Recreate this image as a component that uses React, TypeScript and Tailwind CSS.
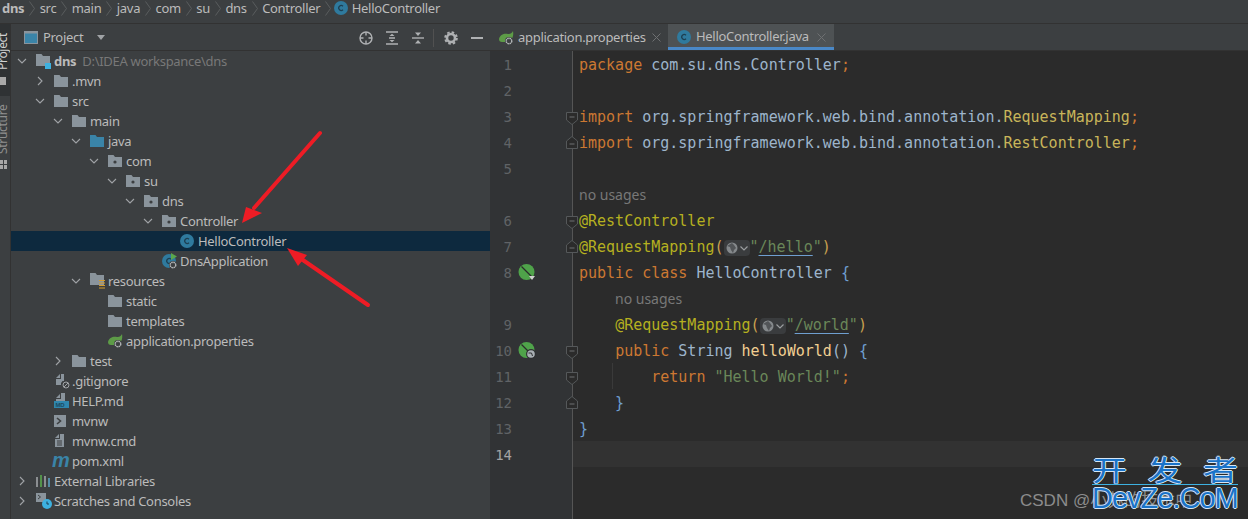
import type { ReactNode } from 'react';

const uiFont = "font-['Noto_Sans',sans-serif] tracking-[-0.3px]";

function Chevron({ open }: { open: boolean }) {
  return (
    <svg width="10" height="10" viewBox="0 0 10 10" fill="none" stroke="#a0a3a6" strokeWidth="1.1">
      {open ? <path d="M1 3l4 4 4-4" /> : <path d="M3 1l4 4-4 4" />}
    </svg>
  );
}

function Folder({ color = '#8a949c', dot = false }: { color?: string; dot?: boolean }) {
  return (
    <svg width="14" height="12" viewBox="0 0 14 12">
      <path d="M0 0h5.5l1.5 2h7v10H0z" fill={color} />
      {dot && <circle cx="7" cy="7" r="1.6" fill="#3c3f41" />}
    </svg>
  );
}

function ClassIcon({ size = 14 }: { size?: number }) {
  return (
    <svg width={size} height={size} viewBox="0 0 14 14">
      <circle cx="7" cy="7" r="7" fill="#2f7a9e" />
      <path d="M9 5.2a2.5 2.5 0 1 0 0 3.6" fill="none" stroke="#1d3f52" strokeWidth="1.2" />
    </svg>
  );
}

function Gear({ x, y }: { x: number; y: number }) {
  return (
    <g>
      <circle cx={x} cy={y} r="4" fill="#3c3f41" />
      <circle cx={x} cy={y} r="2.8" fill="none" stroke="#b5b8ba" strokeWidth="1.4" strokeDasharray="1.6 0.6" />
    </g>
  );
}

function LeafIcon() {
  return (
    <svg width="16" height="14" viewBox="0 0 16 14">
      <path d="M0 8C1 3 6 2 9 3c2 .5 4-1 5-3 1 5-1 10-6 11H3C1 11 0 10 0 8z" fill="#5d9b47" />
      <Gear x={10} y={10} />
    </svg>
  );
}

function AppIcon() {
  return (
    <svg width="16" height="16" viewBox="0 0 16 16">
      <circle cx="7" cy="8" r="7" fill="#2f7a9e" />
      <path d="M9 6.2a2.5 2.5 0 1 0 0 3.6" fill="none" stroke="#1d3f52" strokeWidth="1.2" />
      <path d="M9 0l6 3.5-6 3.5z" fill="#5aa74d" />
      <Gear x={11} y={12} />
    </svg>
  );
}

function treeIcon(kind: string) {
  switch (kind) {
    case 'module':
      return (
        <svg width="16" height="15" viewBox="0 0 16 15">
          <path d="M0 0h5.5l1.5 2h7v10H0z" fill="#8a949c" />
          <rect x="9" y="9" width="6" height="6" fill="#3db1e0" />
        </svg>
      );
    case 'folder':
      return <Folder />;
    case 'source':
      return <Folder color="#3a84a8" />;
    case 'package':
      return <Folder dot />;
    case 'resources':
      return (
        <svg width="16" height="16" viewBox="0 0 16 16">
          <path d="M0 0h5.5l1.5 2h7v10H0z" fill="#8a949c" />
          <path d="M9 7.5h6M9 10h6M9 12.5h6M9 15h6" stroke="#d49b2c" strokeWidth="1.2" />
        </svg>
      );
    case 'class':
      return <ClassIcon />;
    case 'app':
      return <AppIcon />;
    case 'leaf':
      return <LeafIcon />;
    case 'ignore':
      return (
        <svg width="16" height="16" viewBox="0 0 16 16">
          <path d="M2 5l4-4v4zM7 1h3v7H8.5L7 10v2H2V6h5z" fill="#8a949c" />
          <circle cx="12" cy="12" r="3" fill="none" stroke="#a0a3a6" strokeWidth="1" />
          <path d="M10 14l4-4" stroke="#a0a3a6" />
        </svg>
      );
    case 'md':
      return (
        <svg width="16" height="16" viewBox="0 0 16 16">
          <path d="M2 5l4-4v4zM7 0h4v8H2V6h5z" fill="#8a949c" />
          <rect x="0" y="8" width="15" height="7" fill="#2f86ad" />
          <text x="1.5" y="14" fontSize="6" fontWeight="700" fill="#1c4a60" fontFamily="Liberation Sans, sans-serif">MD</text>
        </svg>
      );
    case 'shell':
      return (
        <svg width="14" height="14" viewBox="0 0 14 14">
          <rect width="12" height="12" y="1" fill="#8a949c" />
          <path d="M3 4l3.5 3L3 10" fill="none" stroke="#3c3f41" strokeWidth="1.6" />
        </svg>
      );
    case 'text':
      return (
        <svg width="14" height="16" viewBox="0 0 14 16">
          <path d="M1 5l4-4v4zM6 1h4v13H1V6h5z" fill="#8a949c" />
          <path d="M3 8h5M3 10h5M3 12h5" stroke="#3c3f41" />
        </svg>
      );
    case 'maven':
      return (
        <span className="font-['Liberation_Sans',sans-serif] -ml-[2px] -mt-[3px] text-[20px] leading-none font-bold italic text-[#3a84a8]">m</span>
      );
    case 'libs':
      return (
        <svg width="15" height="12" viewBox="0 0 15 12">
          <path d="M1 2v10" stroke="#a0a3a6" strokeWidth="1.6" />
          <path d="M5 0v12" stroke="#5aa74d" strokeWidth="1.6" />
          <path d="M9 1v11" stroke="#a0a3a6" strokeWidth="1.6" />
          <path d="M13 3v9" stroke="#5a9fc0" strokeWidth="1.6" />
        </svg>
      );
    case 'scratch':
      return (
        <svg width="16" height="16" viewBox="0 0 16 16">
          <rect width="10" height="9" fill="#8a949c" />
          <path d="M2 2l2.5 2L2 6" fill="none" stroke="#3c3f41" />
          <circle cx="11" cy="11" r="5" fill="#3db1e0" />
          <path d="M11 8.5V11h2" fill="none" stroke="#1d3f52" />
        </svg>
      );
    default:
      return null;
  }
}

type TreeRow = { depth: number; label: string; icon: string; open?: boolean; hint?: string; selected?: boolean };

const treeRows: TreeRow[] = [
  { depth: 0, label: 'dns', icon: 'module', open: true, hint: 'D:\\IDEA workspance\\dns' },
  { depth: 1, label: '.mvn', icon: 'folder', open: false },
  { depth: 1, label: 'src', icon: 'folder', open: true },
  { depth: 2, label: 'main', icon: 'folder', open: true },
  { depth: 3, label: 'java', icon: 'source', open: true },
  { depth: 4, label: 'com', icon: 'package', open: true },
  { depth: 5, label: 'su', icon: 'package', open: true },
  { depth: 6, label: 'dns', icon: 'package', open: true },
  { depth: 7, label: 'Controller', icon: 'package', open: true },
  { depth: 8, label: 'HelloController', icon: 'class', selected: true },
  { depth: 7, label: 'DnsApplication', icon: 'app' },
  { depth: 3, label: 'resources', icon: 'resources', open: true },
  { depth: 4, label: 'static', icon: 'folder' },
  { depth: 4, label: 'templates', icon: 'folder' },
  { depth: 4, label: 'application.properties', icon: 'leaf' },
  { depth: 2, label: 'test', icon: 'folder', open: false },
  { depth: 1, label: '.gitignore', icon: 'ignore' },
  { depth: 1, label: 'HELP.md', icon: 'md' },
  { depth: 1, label: 'mvnw', icon: 'shell' },
  { depth: 1, label: 'mvnw.cmd', icon: 'text' },
  { depth: 1, label: 'pom.xml', icon: 'maven' },
  { depth: 0, label: 'External Libraries', icon: 'libs', open: false },
  { depth: 0, label: 'Scratches and Consoles', icon: 'scratch', open: false },
];

function TreeItem({ row }: { row: TreeRow }) {
  return (
    <div
      className={`flex h-5 items-center text-[13px] leading-[18px] text-[#bbbbbb] ${row.selected ? 'bg-[#0d293e]' : ''}`}
      style={{ paddingLeft: 6 + row.depth * 18 }}
    >
      <div className="flex w-[19px] shrink-0 items-center">
        {row.open !== undefined && <Chevron open={row.open} />}
      </div>
      <div className="flex w-[18px] shrink-0 items-center">{treeIcon(row.icon)}</div>
      <span className={row.depth === 0 && row.hint ? 'font-bold' : ''}>{row.label}</span>
      {row.hint && <span className="ml-[6px] text-[#787878]">{row.hint}</span>}
    </div>
  );
}

const crumbs = ['src', 'main', 'java', 'com', 'su', 'dns', 'Controller'];

function CrumbSep() {
  return (
    <svg className="ml-[5px] mr-[4.4px]" width="6" height="15" viewBox="0 0 6 15" fill="none" stroke="#5a5d5f">
      <path d="M0.5 0.5l5 7-5 7" />
    </svg>
  );
}

function Breadcrumb() {
  return (
    <div className="flex h-[24px] shrink-0 items-center border-b border-[#323232] pb-[7px] pl-[2px] text-[13px] leading-[16px] text-[#bbbbbb]">
      <span className="font-bold">dns</span>
      <CrumbSep />
      {crumbs.map((c) => (
        <div key={c} className="flex items-center">
          <span>{c}</span>
          <CrumbSep />
        </div>
      ))}
      <div className="-ml-[2px] mr-1">
        <ClassIcon />
      </div>
      <span>HelloController</span>
    </div>
  );
}

function LeftStripe() {
  return (
    <div className="flex w-[11px] shrink-0 flex-col items-end overflow-hidden border-r border-[#323232] bg-[#3c3f41] text-[12px] text-[#a8a8a8]">
      <div className="flex h-[72px] w-full flex-col bg-[#2f3234]">
        <div className="flex h-[46px] w-full justify-end overflow-hidden">
          <span className="rotate-180 pr-[3px] leading-[14px] text-[#d0d0d0] [writing-mode:vertical-rl]">Project</span>
        </div>
        <div className="mt-[7px] h-2 w-[6px] bg-[#a8a8a8]" />
      </div>
      <div className="mt-[2px] flex h-[56px] w-full justify-end overflow-hidden">
        <span className="rotate-180 pr-[3px] leading-[14px] text-[#8f8f8f] [writing-mode:vertical-rl]">Structure</span>
      </div>
      <div className="mt-[6px] grid w-[7px] grid-cols-2 gap-px self-start">
        <div className="h-[4px] bg-[#a8a8a8]" />
        <div className="h-[4px] bg-[#a8a8a8]" />
        <div className="h-[4px] bg-[#a8a8a8]" />
        <div className="h-[4px] bg-[#a8a8a8]" />
      </div>
    </div>
  );
}

function ProjectHeader() {
  return (
    <div className="flex h-[27px] shrink-0 items-center border-b border-[#323232] pt-[1px] text-[13px] text-[#bbbbbb]">
      <svg className="ml-[13px]" width="14" height="13" viewBox="0 0 14 13">
        <rect x="0.5" y="0.5" width="13" height="12" fill="#3a84a8" stroke="#8a949c" />
        <path d="M1 1.5h12" stroke="#8a949c" strokeWidth="2" />
      </svg>
      <span className="ml-[5px]">Project</span>
      <svg className="ml-[14px]" width="8" height="5" viewBox="0 0 8 5">
        <path d="M0 0h8L4 5z" fill="#a0a3a6" />
      </svg>
      <div className="ml-auto flex items-center pr-[7px]">
        <svg className="mr-[12px]" width="14" height="14" viewBox="0 0 14 14" fill="none" stroke="#afb1b3" strokeWidth="1.4">
          <circle cx="7" cy="7" r="6" />
          <path d="M7 1v3.5M7 9.5V13M1 7h3.5M9.5 7H13" />
        </svg>
        <svg className="mr-[12px]" width="14" height="14" viewBox="0 0 14 14" fill="none" stroke="#afb1b3" strokeWidth="1.4">
          <path d="M1 1h12M1 13h12M4 7h6" />
          <path d="M4.5 5L7 2.7 9.5 5zM4.5 9L7 11.3 9.5 9z" fill="#afb1b3" stroke="none" />
        </svg>
        <svg className="mr-[8px]" width="14" height="14" viewBox="0 0 14 14" fill="none" stroke="#afb1b3" strokeWidth="1.4">
          <path d="M1 7h12" />
          <path d="M4 1.5L7 5l3-3.5zM4 12.5L7 9l3 3.5z" fill="#afb1b3" stroke="none" />
        </svg>
        <div className="mr-[10px] h-[18px] w-px bg-[#515151]" />
        <svg className="mr-[13px]" width="14" height="14" viewBox="0 0 14 14">
          <circle cx="7" cy="7" r="4" fill="none" stroke="#afb1b3" strokeWidth="2.6" />
          <circle cx="7" cy="7" r="5.8" fill="none" stroke="#afb1b3" strokeWidth="2" strokeDasharray="2.5 2.05" />
        </svg>
        <div className="h-[2px] w-3 bg-[#afb1b3]" />
      </div>
    </div>
  );
}

function ProjectPanel() {
  return (
    <div className="flex w-[479px] shrink-0 flex-col bg-[#3c3f41]">
      <ProjectHeader />
      <div className="flex-1">
        {treeRows.map((row, i) => (
          <TreeItem key={i} row={row} />
        ))}
      </div>
    </div>
  );
}

function CloseX() {
  return (
    <svg width="9" height="9" viewBox="0 0 9 9" stroke="#6e7072" fill="none">
      <path d="M0.5 0.5l8 8M8.5 0.5l-8 8" />
    </svg>
  );
}

function Tabs() {
  return (
    <div className="flex h-[27px] shrink-0 border-b border-[#323232] bg-[#3c3f41] text-[13px] text-[#bbbbbb]">
      <div className="flex w-[178px] items-center pt-[1px] pl-[9px]">
        <LeafIcon />
        <span className="ml-[3px]">application.properties</span>
        <div className="ml-auto mr-[7px]">
          <CloseX />
        </div>
      </div>
      <div className="flex w-[166px] items-center border-b-[3px] border-[#4a88c7] bg-[#4e5254] pt-[3px] pl-[9px]">
        <ClassIcon />
        <span className="ml-[5px]">HelloController.java</span>
        <div className="ml-auto mr-[8px]">
          <CloseX />
        </div>
      </div>
    </div>
  );
}

function Fold({ kind }: { kind: 'down' | 'up' }) {
  if (kind === 'up') {
    return (
      <svg className="absolute right-[-6px] top-[7px] z-10" width="12" height="13" viewBox="0 0 12 13" fill="#2b2b2b" stroke="#55585a">
        <path d="M0.5 12.5V5L6 0.5 11.5 5v7.5z" />
        <path d="M3.5 8h5" stroke="#6e7072" />
      </svg>
    );
  }
  return (
    <svg className="absolute right-[-6px] top-[9px] z-10" width="12" height="13" viewBox="0 0 12 13" fill="#2b2b2b" stroke="#55585a">
      <path d="M0.5 0.5h11V8L6 12.5 0.5 8z" />
      <path d="M3.5 5h5" stroke="#6e7072" />
    </svg>
  );
}

function SpringMark({ web }: { web?: boolean }) {
  return (
    <svg width="18" height="18" viewBox="0 0 18 18">
      <circle cx="8.5" cy="8" r="8" fill="#4fa34a" />
      <path d="M3.5 2.5L14 13" stroke="#2b2b2b" strokeWidth="1.3" />
      {web ? (
        <g>
          <circle cx="13" cy="12" r="5" fill="#2f3133" />
          <circle cx="13" cy="12" r="3.8" fill="#a9b0b5" />
          <path d="M10.5 11h3l1 3" stroke="#2f3133" fill="none" />
        </g>
      ) : (
        <path d="M11 12h6l-3 4z" fill="#d0d0d0" />
      )}
    </svg>
  );
}

function Chip() {
  return (
    <span className="inline-flex h-[16px] w-[26px] items-center gap-[2px] rounded-[4px] bg-[#3a3c3e] pl-[2px] align-[-2px]">
      <svg width="12" height="12" viewBox="0 0 12 12">
        <circle cx="6" cy="6" r="5.5" fill="#85898c" />
        <path d="M1 4l3 1 1 3 2 3 1-3 2-2-2-3-2-2z" fill="#3c3f41" opacity="0.7" />
      </svg>
      <svg width="8" height="5" viewBox="0 0 8 5" fill="none" stroke="#9a9d9f" strokeWidth="1.2">
        <path d="M0.5 0.5L4 4l3.5-3.5" />
      </svg>
    </span>
  );
}

const kw = 'text-[#cc7832]';
const plain = 'text-[#9db5cc]';
const ann = 'text-[#b5b020]';
const str = 'text-[#6a8759]';
const brace = 'text-[#6f9fd0]';

type CodeLine = {
  no?: number;
  code?: ReactNode;
  fold?: 'down' | 'up';
  mark?: ReactNode;
  hint?: string;
  guide?: boolean;
  current?: boolean;
};

const codeLines: CodeLine[] = [
  {
    no: 1,
    code: (
      <>
        <span className={kw}>package</span> <span className={plain}>com.su.dns.Controller</span>
        <span className={kw}>;</span>
      </>
    ),
  },
  { no: 2 },
  {
    no: 3,
    fold: 'down',
    code: (
      <>
        <span className={kw}>import</span> <span className={plain}>org.springframework.web.bind.annotation.</span>
        <span className="text-[#c8b55a]">RequestMapping</span>
        <span className={kw}>;</span>
      </>
    ),
  },
  {
    no: 4,
    fold: 'up',
    code: (
      <>
        <span className={kw}>import</span> <span className={plain}>org.springframework.web.bind.annotation.</span>
        <span className="text-[#c8b55a]">RestController</span>
        <span className={kw}>;</span>
      </>
    ),
  },
  { no: 5 },
  { hint: 'no usages' },
  { no: 6, fold: 'down', code: <span className={ann}>@RestController</span> },
  {
    no: 7,
    fold: 'up',
    code: (
      <>
        <span className={ann}>@RequestMapping</span>
        <span className="text-[#c8a050]">(</span>
        <Chip />
        <span className={str}>"</span>
        <span className={`${str} underline decoration-[#6f9fd0] underline-offset-[3px]`}>/hello</span>
        <span className={str}>"</span>
        <span className="text-[#c8a050]">)</span>
      </>
    ),
  },
  {
    no: 8,
    mark: <SpringMark />,
    code: (
      <>
        <span className={kw}>public class</span> <span className={plain}>HelloController</span> <span className={brace}>{'{'}</span>
      </>
    ),
  },
  { hint: '    no usages' },
  {
    no: 9,
    code: (
      <>
        {'    '}
        <span className={ann}>@RequestMapping</span>
        <span className="text-[#c8a050]">(</span>
        <Chip />
        <span className={str}>"</span>
        <span className={`${str} underline decoration-[#6f9fd0] underline-offset-[3px]`}>/world</span>
        <span className={str}>"</span>
        <span className="text-[#c8a050]">)</span>
      </>
    ),
  },
  {
    no: 10,
    fold: 'down',
    mark: <SpringMark web />,
    code: (
      <>
        {'    '}
        <span className={kw}>public</span> <span className={plain}>String</span> <span className="text-[#f2cf92]">helloWorld</span>
        <span className={plain}>()</span> <span className={brace}>{'{'}</span>
      </>
    ),
  },
  {
    no: 11,
    fold: 'down',
    guide: true,
    code: (
      <>
        {'        '}
        <span className={kw}>return</span> <span className={str}>"Hello World!"</span>
        <span className={kw}>;</span>
      </>
    ),
  },
  { no: 12, fold: 'up', code: <span className={brace}>{'    }'}</span> },
  { no: 13, code: <span className={brace}>{'}'}</span> },
  { no: 14, current: true },
];

function EditorLine({ line }: { line: CodeLine }) {
  return (
    <div className="flex h-[26px]">
      <div className="relative flex w-[83px] shrink-0 items-center border-r border-[#555555] bg-[#313335] pt-[2px]">
        <span className={`w-[22px] text-right text-[14px] ${line.current ? 'text-[#a4a3a3]' : 'text-[#606366]'}`}>{line.no}</span>
        <div className="ml-[6px] flex w-[18px] items-center">{line.mark}</div>
        {line.fold && <Fold kind={line.fold} />}
      </div>
      <div className={`relative flex-1 pt-[1px] pl-[6px] leading-[26px] whitespace-pre ${line.current ? 'bg-[#323232]' : ''}`}>
        {line.guide && <div className="absolute left-[39px] top-0 h-full w-px bg-[#3a3a3a]" />}
        {line.hint ? (
          <span className="font-['Noto_Sans',sans-serif] text-[14px] text-[#787878]">
            {line.hint.startsWith(' ') ? <span className="inline-block w-[36px]" /> : null}
            {line.hint.trim()}
          </span>
        ) : (
          line.code
        )}
      </div>
    </div>
  );
}

function Editor() {
  return (
    <div className="flex min-w-0 flex-1 flex-col">
      <Tabs />
      <div className="flex flex-1 flex-col bg-[#2b2b2b] font-['DejaVu_Sans_Mono',monospace] text-[15px] tracking-normal">
        {codeLines.map((line, i) => (
          <EditorLine key={i} line={line} />
        ))}
        <div className="flex flex-1">
          <div className="w-[83px] shrink-0 border-r border-[#555555] bg-[#313335]" />
        </div>
      </div>
    </div>
  );
}

function Arrows() {
  return (
    <svg className="pointer-events-none absolute inset-0" width="1248" height="519" viewBox="0 0 1248 519">
      <path d="M320 133L254 208" stroke="#ee1c25" strokeWidth="4" strokeLinecap="round" />
      <path d="M242 223l4-16 16 6z" fill="#ee1c25" />
      <path d="M368 305L300 258" stroke="#ee1c25" strokeWidth="4" strokeLinecap="round" />
      <path d="M287 248l11 18 9-11z" fill="#ee1c25" />
    </svg>
  );
}

const watermarkStroke = '[text-shadow:1px_0_0_#d6e6f5,-1px_0_0_#d6e6f5,0_1px_0_#d6e6f5,0_-1px_0_#d6e6f5]';

function Watermark() {
  return (
    <div className="pointer-events-none absolute top-[452px] left-[1020px] h-[62px] w-[228px] tracking-normal">
      <div className="absolute top-[36px] left-0 whitespace-nowrap font-['Liberation_Sans','Noto_Sans_CJK_SC',sans-serif] text-[17px] text-[#8c8c8c]">CSDN @小苏的技术中</div>
      <div className={`absolute top-0 left-[72px] flex w-[146px] scale-y-[0.8] justify-between font-['Noto_Sans_CJK_SC',sans-serif] text-[35px] leading-[34px] text-[#1a73c8] ${watermarkStroke}`}>
        <span>开</span>
        <span>发</span>
        <span>者</span>
      </div>
      <div className="absolute top-[32px] left-[72px] h-px w-[146px] bg-[#3db1e0]" />
      <div className={`absolute top-[30px] left-[72px] font-['Liberation_Sans',sans-serif] text-[29px] leading-[32px] tracking-[-1px] whitespace-nowrap text-[#1a73c8] ${watermarkStroke}`}>DevZe.CoM</div>
    </div>
  );
}

export default function App() {
  return (
    <div className={`relative flex h-[519px] w-[1248px] flex-col overflow-hidden bg-[#3c3f41] ${uiFont}`}>
      <Breadcrumb />
      <div className="flex min-h-0 flex-1">
        <LeftStripe />
        <ProjectPanel />
        <Editor />
      </div>
      <Arrows />
      <Watermark />
    </div>
  );
}
